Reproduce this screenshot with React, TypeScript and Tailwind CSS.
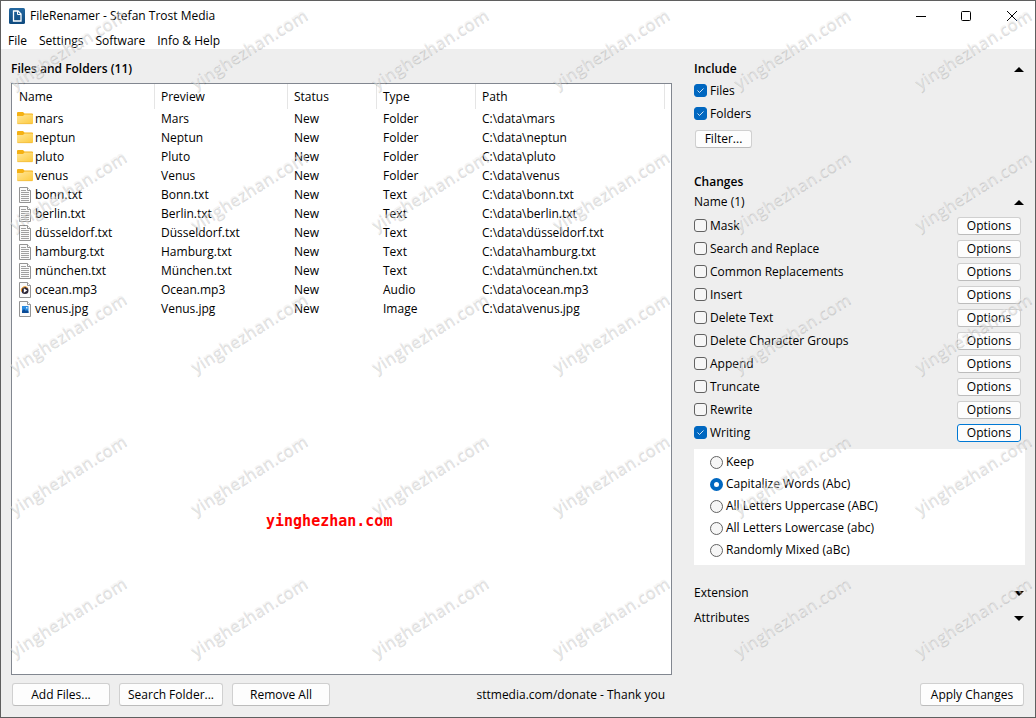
import React, { useState } from "react";

type Kind = "folder" | "text" | "audio" | "image";

const rows: { name: string; preview: string; type: string; kind: Kind }[] = [
  { name: "mars", preview: "Mars", type: "Folder", kind: "folder" },
  { name: "neptun", preview: "Neptun", type: "Folder", kind: "folder" },
  { name: "pluto", preview: "Pluto", type: "Folder", kind: "folder" },
  { name: "venus", preview: "Venus", type: "Folder", kind: "folder" },
  { name: "bonn.txt", preview: "Bonn.txt", type: "Text", kind: "text" },
  { name: "berlin.txt", preview: "Berlin.txt", type: "Text", kind: "text" },
  { name: "düsseldorf.txt", preview: "Düsseldorf.txt", type: "Text", kind: "text" },
  { name: "hamburg.txt", preview: "Hamburg.txt", type: "Text", kind: "text" },
  { name: "münchen.txt", preview: "München.txt", type: "Text", kind: "text" },
  { name: "ocean.mp3", preview: "Ocean.mp3", type: "Audio", kind: "audio" },
  { name: "venus.jpg", preview: "Venus.jpg", type: "Image", kind: "image" },
];

const changes = [
  "Mask",
  "Search and Replace",
  "Common Replacements",
  "Insert",
  "Delete Text",
  "Delete Character Groups",
  "Append",
  "Truncate",
  "Rewrite",
  "Writing",
];

const writingModes = [
  "Keep",
  "Capitalize Words (Abc)",
  "All Letters Uppercase (ABC)",
  "All Letters Lowercase (abc)",
  "Randomly Mixed (aBc)",
];

function FolderIcon() {
  return (
    <svg width="16" height="16" viewBox="0 0 16 16" aria-hidden="true">
      <defs>
        <linearGradient id="folder" x1="0" y1="0" x2="1" y2="1">
          <stop offset="0" stopColor="#ffe69a" />
          <stop offset="1" stopColor="#fdca3c" />
        </linearGradient>
      </defs>
      <path d="M0 2Q0 1 1 1h5l1.500 1.500H15q1 0 1 1V8H0z" fill="#f5b113" />
      <path d="M0 5h6l1.500-1.500H15q1 0 1 1V12q0 1-1 1H1q-1 0-1-1z" fill="url(#folder)" />
      <path d="M.5 12.700h15" stroke="#eeb535" strokeWidth=".6" />
    </svg>
  );
}

function FileIcon({ kind }: { kind: Kind }) {
  return (
    <svg width="12" height="16" viewBox="0 0 12 16" aria-hidden="true">
      <path d="M.5.5h8l3 3v12H.5z" fill="#fafafa" stroke="#949494" />
      <path d="M8.500.5v3h3" fill="#fff" stroke="#949494" />
      {kind === "text" && (
        <path d="M2 3.500h5M2 5.500h8M2 7.500h8M2 9.500h8M2 11.500h8M2 13.500h8" stroke="#a0a0a0" />
      )}
      {kind === "audio" && (
        <>
          <circle cx="6" cy="8.500" r="3.500" fill="#2b2536" />
          <path d="M2.500 9.500A3.600 3.600 0 0 1 8.500 5.800" fill="none" stroke="#f0941c" />
          <path d="M4.800 6.300v4.400l3.400-2.200z" fill="#fff" />
        </>
      )}
      {kind === "image" && (
        <>
          <path d="M3 5h6.500v7H3z" fill="#2a8be0" />
          <path d="M3 12V10l2-2 2 2 1-1 1.500 1.500V12z" fill="#0b4a94" />
          <path d="M7 6h1.500v1.500H7z" fill="#d5edff" />
        </>
      )}
    </svg>
  );
}

function Arrow({ up }: { up?: boolean }) {
  return (
    <svg width="10" height="5" viewBox="0 0 10 5" aria-hidden="true">
      <path d={up ? "M0 5L5 0l5 5z" : "M0 0h10L5 5z"} fill="#000" />
    </svg>
  );
}

function Check({ label, on }: { label: string; on?: boolean }) {
  const [checked, setChecked] = useState(!!on);
  return (
    <label className="flex items-center gap-[3px]">
      <span className="grid">
        <input
          type="checkbox"
          checked={checked}
          onChange={() => setChecked(!checked)}
          className="col-start-1 row-start-1 size-[13px] appearance-none rounded-[3px] border border-[#626262] bg-[#f6f6f6] checked:border-[#0067c0] checked:bg-[#0067c0]"
        />
        {checked && (
          <svg className="pointer-events-none col-start-1 row-start-1" width="13" height="13" viewBox="0 0 13 13" aria-hidden="true">
            <path d="M3.500 6.500l2 2 4-4" fill="none" stroke="#cfe3f5" />
          </svg>
        )}
      </span>
      {label}
    </label>
  );
}

function Section({ title, up, bold }: { title: string; up?: boolean; bold?: boolean }) {
  return (
    <button className={"flex w-full items-center justify-between pr-px text-left leading-4 " + (bold ? "font-semibold" : "")}>
      {title}
      <Arrow up={up} />
    </button>
  );
}

const smallButton = "h-[18px] rounded-[3px] border bg-[#fdfdfd] leading-4";
const largeButton = "h-[23px] rounded-[3px] border bg-[#fdfdfd] leading-4";
const greyEdge = " border-[#d0d0d0] border-b-[#bcbcbc]";
const headCell = "border-r border-[#e5e5e5] pl-[6px] text-left font-normal";

function Watermarks() {
  const cols = [0, 1, 2, 3, 4, 5];
  const lines = [0, 1, 2, 3, 4];
  return (
    <svg className="pointer-events-none absolute inset-0 size-full font-['Open_Sans'] text-[17px] font-semibold" aria-hidden="true">
      {lines.map((r) =>
        cols.map((c) => (
          <g key={r + "-" + c} transform={`translate(${13 + c * 181} ${88 + r * 142}) rotate(-32)`}>
            <text x="0" y="1.500" fill="#000" fillOpacity=".15">yinghezhan.com</text>
            <text fill="#ececec" fillOpacity=".5">yinghezhan.com</text>
          </g>
        )),
      )}
    </svg>
  );
}

export default function App() {
  const [mode, setMode] = useState(1);
  return (
    <div className="relative flex min-h-screen flex-col overflow-hidden border border-[#5f5f5f] bg-[#eeeeee] font-['Open_Sans','Noto_Sans',sans-serif] text-xs text-black">
      <header className="bg-white">
        <div className="flex h-[29px] items-center pl-2">
          <svg width="16" height="16" viewBox="0 0 16 16" aria-hidden="true">
            <defs>
              <linearGradient id="app" x1="0" y1="0" x2="0" y2="1">
                <stop offset="0" stopColor="#2468a0" />
                <stop offset="1" stopColor="#0f4a7e" />
              </linearGradient>
            </defs>
            <rect width="16" height="16" rx="1.500" fill="url(#app)" />
            <path d="M4.500 3h4.500l3 3v7H4.500z" fill="none" stroke="#fff" strokeWidth="1.300" />
            <path d="M8.500 3v3.500H12" fill="none" stroke="#fff" />
          </svg>
          <h1 className="ml-[5px] flex-1">FileRenamer - Stefan Trost Media</h1>
          <div className="flex">
            <button aria-label="Minimize" className="grid w-[45px] place-items-center">
              <svg width="10" height="10" viewBox="0 0 10 10"><path d="M0 5.500h10" stroke="#000" /></svg>
            </button>
            <button aria-label="Maximize" className="grid w-[46px] place-items-center">
              <svg width="10" height="10" viewBox="0 0 10 10"><rect x=".5" y=".5" width="9" height="9" rx="1" fill="none" stroke="#000" /></svg>
            </button>
            <button aria-label="Close" className="grid w-[46px] place-items-center">
              <svg width="10" height="10" viewBox="0 0 10 10"><path d="M0 0l10 10M10 0L0 10" stroke="#000" /></svg>
            </button>
          </div>
        </div>
        <nav className="flex h-[19px] items-center gap-3 pl-[7px] pt-[2px]">
          <button>File</button>
          <button>Settings</button>
          <button>Software</button>
          <button>Info &amp; Help</button>
        </nav>
      </header>

      <div className="flex flex-1">
        <main className="flex flex-1 flex-col pl-[10px] pt-3">
          <h2 className="font-semibold leading-4">Files and Folders (11)</h2>
          <div className="mt-[6px] flex-1 border border-[#828790] bg-white">
            <table className="w-full table-fixed border-separate border-spacing-0">
              <colgroup>
                <col className="w-[143px]" />
                <col className="w-[133px]" />
                <col className="w-[89px]" />
                <col className="w-[99px]" />
                <col />
                <col className="w-[6px]" />
              </colgroup>
              <thead>
                <tr className="h-[25px]">
                  <th className="border-r border-[#e5e5e5] pl-[7px] text-left font-normal">Name</th>
                  <th className={headCell}>Preview</th>
                  <th className={headCell}>Status</th>
                  <th className={headCell}>Type</th>
                  <th className={headCell}>Path</th>
                  <td />
                </tr>
              </thead>
              <tbody>
                {rows.map((r) => (
                  <tr key={r.name} className="h-[19px] leading-4">
                    <td>
                      <span className="flex items-center gap-[2px] pl-[5px]">
                        <span className="grid w-4 place-items-center">
                          {r.kind === "folder" ? <FolderIcon /> : <FileIcon kind={r.kind} />}
                        </span>
                        {r.name}
                      </span>
                    </td>
                    <td className="pl-[6px]">{r.preview}</td>
                    <td className="pl-[6px]">New</td>
                    <td className="pl-[6px]">{r.type}</td>
                    <td className="pl-[6px]">{"C:\\data\\" + r.name}</td>
                    <td />
                  </tr>
                ))}
              </tbody>
            </table>
          </div>
          <div className="flex h-[42px] items-center justify-between pb-[3px] pl-px pr-[7px]">
            <div className="flex gap-[9px]">
              <button className={largeButton + greyEdge + " w-[98px]"}>Add Files...</button>
              <button className={largeButton + greyEdge + " w-[104px]"}>Search Folder...</button>
              <button className={largeButton + greyEdge + " w-[98px]"}>Remove All</button>
            </div>
            <a href="#donate">sttmedia.com/donate - Thank you</a>
          </div>
        </main>

        <aside className="flex w-[363px] flex-col pl-[22px] pr-[10px] pt-3">
          <Section title="Include" up bold />
          <div className="mt-[2px] flex flex-col">
            <div className="flex h-[23px] items-center"><Check label="Files" on /></div>
            <div className="flex h-[23px] items-center"><Check label="Folders" on /></div>
          </div>
          <button className={smallButton + greyEdge + " ml-px mt-[5px] w-[57px]"}>Filter...</button>
          <h2 className="mt-[26px] font-semibold leading-4">Changes</h2>
          <div className="mt-1"><Section title="Name (1)" up /></div>
          <ul className="mt-1">
            {changes.map((c) => (
              <li key={c} className="flex h-[23px] items-center justify-between pr-1">
                <Check label={c} on={c === "Writing"} />
                <button className={smallButton + " w-[64px] " + (c === "Writing" ? "border-[#0078d4]" : greyEdge)}>Options</button>
              </li>
            ))}
          </ul>
          <div className="mt-[5px] flex flex-col bg-white pb-1 pl-4 pt-[2px]">
            {writingModes.map((m, i) => (
              <label key={m} className="flex h-[22px] items-center gap-[3px]">
                <input
                  type="radio"
                  name="writing"
                  checked={mode === i}
                  onChange={() => setMode(i)}
                  className="size-[13px] appearance-none rounded-full border border-[#626262] bg-[#f6f6f6] checked:border-4 checked:border-[#0067c0] checked:bg-white"
                />
                {m}
              </label>
            ))}
          </div>
          <div className="mt-5 flex flex-1 flex-col gap-[9px]">
            <Section title="Extension" />
            <Section title="Attributes" />
          </div>
          <div className="flex h-[42px] items-center justify-end pb-[3px] pr-px">
            <button className={largeButton + greyEdge + " w-[104px]"}>Apply Changes</button>
          </div>
        </aside>
      </div>

      <span className="pointer-events-none absolute left-[265px] top-[512px] font-['DejaVu_Sans_Mono',monospace] text-[15px] font-bold leading-4 text-[#ff0000]">
        yinghezhan.com
      </span>
      <Watermarks />
    </div>
  );
}
